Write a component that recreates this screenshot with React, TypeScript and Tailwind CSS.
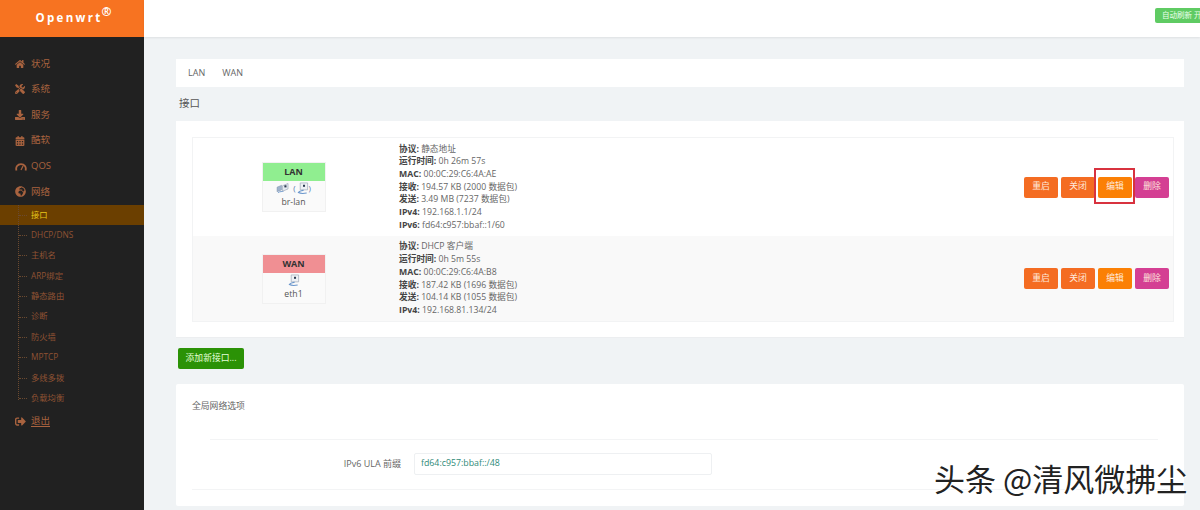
import React from "react";
import { FaHome, FaTools, FaDownload, FaCalendarAlt, FaGlobeAfrica, FaSignOutAlt } from "react-icons/fa";

const font = { fontFamily: '"Open Sans","Noto Sans CJK SC",sans-serif' };

function Gauge() {
  return (
    <svg width="12" height="9" viewBox="0 0 12 9" fill="none" stroke="currentColor">
      <path d="M1.500 8.500a4.800 4.800 0 1 1 9 0" strokeWidth="1.800" />
      <path d="M6 8l2-4" strokeWidth="1.300" />
    </svg>
  );
}

function Eth() {
  return (
    <svg width="12" height="12" viewBox="0 0 13 13" className="inline-block">
      <path d="M3.500 1h8v7.500h-8z" fill="#eef1f5" stroke="#98a3b3" strokeWidth="0.7" />
      <rect x="6.500" y="3" width="2.200" height="2.200" fill="#2b3a50" />
      <path d="M7 8.500C6 10 3 9 1.500 11.500c2 1 6 1 9 .5" fill="none" stroke="#6a96cc" strokeWidth="1.200" />
    </svg>
  );
}

function Bridge() {
  return (
    <svg width="14" height="11" viewBox="0 0 15 12" className="inline-block">
      <path d="M1 4.500l5-2v5l-5 2z" fill="#9fb2cc" stroke="#7a8ca8" strokeWidth="0.5" />
      <path d="M7 3l6-2.500v6L7 9z" fill="#e6ebf2" stroke="#8c99ac" strokeWidth="0.6" />
      <rect x="9" y="2.500" width="2.300" height="2.300" fill="#2b3a50" />
      <path d="M2 10.500c2-1.500 5-1 6-1.500" fill="none" stroke="#6a96cc" strokeWidth="1" />
    </svg>
  );
}

function Main({ children }: { children: React.ReactNode }) {
  return <div className="flex items-center h-[25.6px] pl-[15px] text-[9.500px] text-[#a9633f]">{children}</div>;
}

const mains = [
  { i: <FaHome size={10} />, t: "状况" },
  { i: <FaTools size={10} />, t: "系统" },
  { i: <FaDownload size={10} />, t: "服务" },
  { i: <FaCalendarAlt size={10} />, t: "酷软" },
  { i: <Gauge />, t: "QOS" },
  { i: <FaGlobeAfrica size={11} />, t: "网络" },
];
const subs = ["接口", "DHCP/DNS", "主机名", "ARP绑定", "静态路由", "诊断", "防火墙", "MPTCP", "多线多拨", "负载均衡"];

function Sidebar() {
  return (
    <aside className="w-[144px] shrink-0 bg-[#212121] flex flex-col">
      <div className="h-[37px] bg-[#f77321] flex items-center justify-center pb-[1px] text-white">
        <span className="text-[11.500px] font-bold tracking-[2.300px] ml-[3px]">Openwrt</span>
        <span className="text-[12px] font-bold self-start mt-[4px] -ml-[1px] leading-[16px]">®</span>
      </div>
      <nav className="pt-[14px]">
        {mains.map((m) => (
          <Main key={m.t}>
            <span className="w-[16px] flex justify-start">{m.i}</span>
            <span>{m.t}</span>
          </Main>
        ))}
        <div className="relative">
          {subs.map((s, idx) => (
            <div
              key={s}
              className={
                "relative flex items-center h-[20.400px] pl-[31px] text-[8.300px] " +
                (idx === 0 ? "bg-[#6b3f00] text-[#e8c41a]" : "text-[#8f5233]")
              }
            >
              <span className="absolute left-[19px] top-[10px] w-[8px] border-t border-dotted border-[#6b4a30]" />
              {s}
            </div>
          ))}
          <div className="absolute left-[18px] top-0 h-[195px] border-l border-dotted border-[#6b4a30]" />
        </div>
        <Main>
          <span className="w-[16px] flex"><FaSignOutAlt size={11} /></span>
          <span className="underline underline-offset-2">退出</span>
        </Main>
      </nav>
    </aside>
  );
}

function Btn({ label, cls, boxed }: { label: string; cls: string; boxed?: boolean }) {
  return (
    <div className="relative">
      <button className={"block h-[21px] w-[34px] rounded-[2px] text-[8.800px] text-[#ffe9dc] " + cls}>{label}</button>
      {boxed && <div className="absolute -left-[4px] -top-[9px] w-[41px] h-[36px] border-2 border-[#d8323f]" />}
    </div>
  );
}

function Row({
  name, dev, color, icons, info, cls, h,
}: {
  name: string; dev: string; color: string; icons: React.ReactNode; info: [string, string][]; cls: string; h: string;
}) {
  return (
    <div className={"flex items-center " + cls + " " + h}>
      <div className="w-[206px] flex justify-center">
        <div className="w-[64px] ml-[-5px] border border-[#f1f1f1] bg-[#fafafa] text-center">
          <div className={"h-[18px] flex items-center justify-center text-[9px] font-bold text-[#333] " + color}>{name}</div>
          <div className="h-[14px] flex items-center justify-center text-[8px] text-[#5577aa]">{icons}</div>
          <div className="h-[16px] text-[8.700px] leading-[15px] text-[#555]">{dev}</div>
        </div>
      </div>
      <div className="flex-1 text-[8.700px] leading-[12.700px] text-[#666]">
        {info.map(([k, v]) => (
          <div key={k} className="whitespace-nowrap"><b className="text-[#444]">{k}:</b> {v}</div>
        ))}
      </div>
      <div className="flex gap-[3px] pr-[4px]">
        <Btn label="重启" cls="bg-[#f46c22]" />
        <Btn label="关闭" cls="bg-[#f46c22]" />
        <Btn label="编辑" cls="bg-[#fb8005]" boxed={name === "LAN"} />
        <Btn label="删除" cls="bg-[#d43f93]" />
      </div>
    </div>
  );
}

export default function App() {
  return (
    <div style={font} className="relative flex h-[510px] w-[1200px] overflow-hidden bg-[#f0f3f5]">
      <Sidebar />
      <div className="flex-1 flex flex-col min-w-0">
        <header className="h-[37px] bg-white shadow-[0_1px_2px_rgba(0,0,0,0.08)] flex justify-end items-start overflow-hidden shrink-0">
          <div className="mt-[8px] h-[15px] w-[45px] rounded-l-[2px] bg-[#5fcb63] text-[7.500px] leading-[15px] pl-[7px] whitespace-nowrap overflow-hidden text-[#eaffea]">
            自动刷新 开
          </div>
        </header>
        <main className="pl-[32px] pr-[16px] pt-[22px]">
          <div className="h-[28px] bg-white flex items-center gap-[17px] pl-[12px] text-[9px] text-[#666]">
            <span>LAN</span>
            <span>WAN</span>
          </div>
          <h2 className="h-[34px] pl-[3px] flex items-center text-[10.500px] font-normal text-[#555]">接口</h2>
          <section className="h-[217px] bg-white pt-[16px] pl-[16px] pr-[10px] border-b border-[#eceef0]">
            <div className="border border-[#f2f3f4]">
              <Row
                name="LAN" dev="br-lan" color="bg-[#90ee90]" cls="bg-white" h="h-[98px]"
                icons={<><Bridge /><span className="ml-[3px] mr-[1px]">(</span><Eth /><span>)</span></>}
                info={[
                  ["协议", "静态地址"], ["运行时间", "0h 26m 57s"], ["MAC", "00:0C:29:C6:4A:AE"],
                  ["接收", "194.57 KB (2000 数据包)"], ["发送", "3.49 MB (7237 数据包)"],
                  ["IPv4", "192.168.1.1/24"], ["IPv6", "fd64:c957:bbaf::1/60"],
                ]}
              />
              <Row
                name="WAN" dev="eth1" color="bg-[#f08f93]" cls="bg-[#f9f9f9]" h="h-[85px]"
                icons={<Eth />}
                info={[
                  ["协议", "DHCP 客户端"], ["运行时间", "0h 5m 55s"], ["MAC", "00:0C:29:C6:4A:B8"],
                  ["接收", "187.42 KB (1696 数据包)"], ["发送", "104.14 KB (1055 数据包)"],
                  ["IPv4", "192.168.81.134/24"],
                ]}
              />
            </div>
          </section>
          <button className="mt-[10px] ml-[2px] block h-[21px] w-[66px] rounded-[2px] bg-[#2b9206] text-[8.800px] text-[#e4ffd8]">添加新接口...</button>
          <section className="mt-[15px] h-[122px] bg-white rounded-[2px] pl-[16px] pr-[16px]">
            <div className="h-[55px] pt-[16px] text-[8.800px] leading-[13px] text-[#666]">全局网络选项</div>
            <div className="ml-[18px] mr-[10px] border-t border-[#f3f4f5] flex items-center h-[50px] pb-[2px]">
              <label className="w-[191px] text-right text-[9px] text-[#666]">IPv6 ULA 前缀</label>
              <div className="ml-[13px] w-[298px] h-[22px] border border-[#eef0f2] rounded-[2px] pl-[6px] flex items-center text-[8.800px] text-[#2f8a78]">fd64:c957:bbaf::/48</div>
            </div>
            <div className="border-t border-[#f3f4f5]" />
          </section>
        </main>
      </div>
      <div
        style={{ fontFamily: '"Noto Sans CJK SC",sans-serif', textShadow: "1px 1px 0 #fff, -1px -1px 0 #fff" }}
        className="absolute left-[934px] top-[459px] text-[31px] leading-[38px] text-[#222] whitespace-nowrap"
      >
        头条 @清风微拂尘
      </div>
    </div>
  );
}
